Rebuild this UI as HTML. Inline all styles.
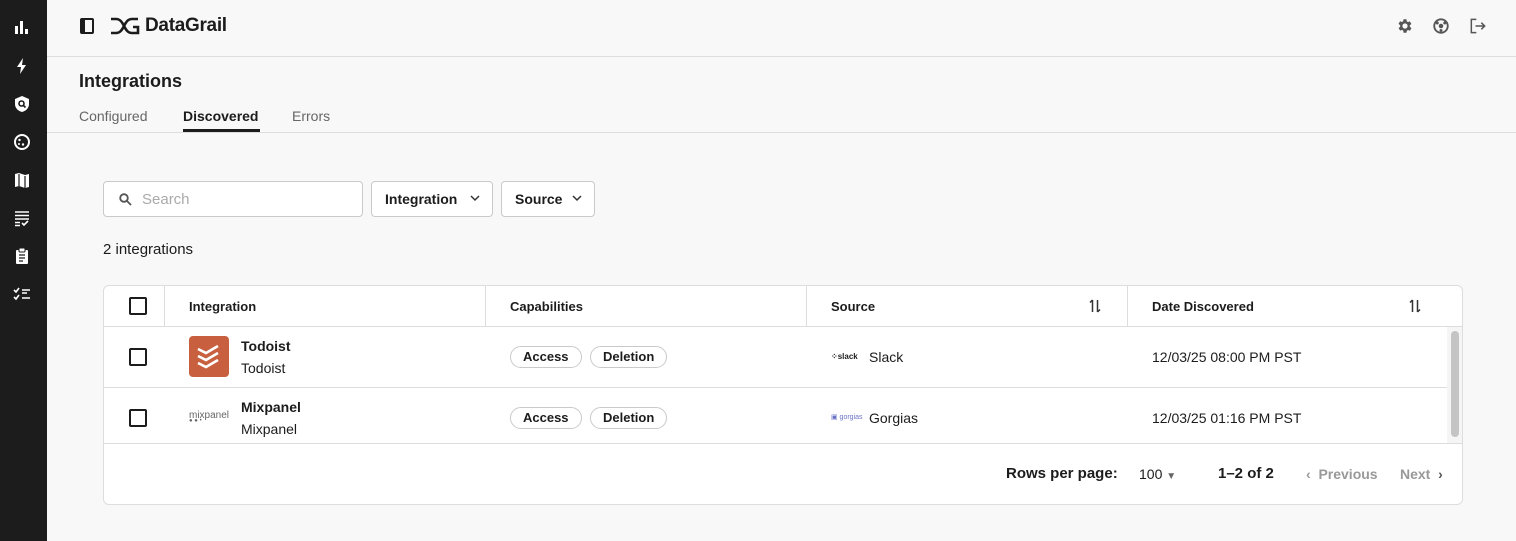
<!DOCTYPE html>
<html><head><style>
*{box-sizing:border-box;margin:0;padding:0}
body{width:1516px;height:541px;overflow:hidden;font-family:"Liberation Sans",sans-serif;background:#f7f8f7;color:#1b1c1b;position:relative;white-space:nowrap}
.sb{position:absolute;left:0;top:0;width:47px;height:541px;background:#1b1c1b}
.sb svg{position:absolute;left:13px}
.hd{position:absolute;left:47px;top:0;right:0;height:57px;background:#f7f8f7;border-bottom:1px solid #dcdddc}
.abs{position:absolute}
.tab{position:absolute;top:108px;font-size:14px;color:#666}
.box{position:absolute;background:#fff;border:1px solid #c9cac9;border-radius:4px;height:36px;top:181px;font-size:14px}
.tbl{position:absolute;left:103px;top:285px;width:1360px;height:220px;background:#fff;border:1px solid #dcdddc;border-radius:6px;overflow:hidden}
.th{position:absolute;top:13px;font-size:13px;font-weight:bold}
.cb{position:absolute;left:25px;width:18px;height:18px;border:2px solid #1b1c1b;border-radius:2px}
.pill{position:absolute;height:22px;border:1px solid #c9cac9;border-radius:11px;font-size:13px;font-weight:bold;padding:0 12px;line-height:20px}
.t{position:absolute;font-size:14px}
</style></head><body>
<div class="sb">
<svg style="top:18px" width="18" height="18" viewBox="0 0 18 18" fill="#fff"><rect x="2" y="8" width="3" height="8"/><rect x="7" y="3" width="3" height="13"/><rect x="12" y="11" width="3" height="5"/></svg>
<svg style="top:57px" width="18" height="18" viewBox="0 0 18 18" fill="#fff"><path d="M10 1L4 10h4l-1 7 6-9H9z"/></svg>
<svg style="top:95px" width="18" height="18" viewBox="0 0 18 18"><path d="M9 1l7 3v5c0 4-3 7-7 8-4-1-7-4-7-8V4z" fill="#fff"/><circle cx="8.5" cy="8.5" r="2.5" fill="none" stroke="#1b1c1b" stroke-width="1.6"/><path d="M10.5 10.5l2 2" stroke="#1b1c1b" stroke-width="1.6"/></svg>
<svg style="top:133px" width="18" height="18" viewBox="0 0 18 18"><circle cx="9" cy="9" r="7" fill="none" stroke="#fff" stroke-width="2"/><circle cx="6.5" cy="7" r="1.2" fill="#fff"/><circle cx="10" cy="11.5" r="1.2" fill="#fff"/><circle cx="6" cy="11" r="1" fill="#fff"/></svg>
<svg style="top:171px" width="18" height="18" viewBox="0 0 18 18" fill="#fff"><path d="M2 3l4-1 6 2 4-1v13l-4 1-6-2-4 1z"/><path d="M6 3v12M12 5v12" stroke="#1b1c1b" stroke-width="1.2"/></svg>
<svg style="top:209px" width="18" height="18" viewBox="0 0 18 18" stroke="#fff" stroke-width="1.6" fill="none"><path d="M2 3h14M2 6.5h14M2 10h14M2 13.5h5M2 16.5h5M9 14l2 2 4-4"/></svg>
<svg style="top:247px" width="18" height="18" viewBox="0 0 18 18"><rect x="3" y="3" width="12" height="14" rx="1" fill="#fff"/><rect x="6" y="1" width="6" height="4" rx="1" fill="#fff" stroke="#1b1c1b"/><path d="M6 8h6M6 11h6M6 14h4" stroke="#1b1c1b" stroke-width="1.3"/></svg>
<svg style="top:285px" width="18" height="18" viewBox="0 0 18 18" stroke="#fff" stroke-width="1.6" fill="none"><path d="M1 5l2 2 3-4M1 12l2 2 3-4M9 5h8M9 8h5M9 13h8"/></svg>
</div>
<div class="hd">
<div class="abs" style="left:33px;top:18px;width:14px;height:16px;border:2px solid #1b1c1b;border-left-width:5px;border-radius:2px"></div>
<svg class="abs" style="left:63px;top:17px" width="30" height="18" viewBox="0 0 30 18" fill="none" stroke="#1b1c1b" stroke-width="2.6"><path d="M1 2h5c4 0 6 3 8 7s4 7 8 7h6V10h-5M1 16h5c4 0 6-3 8-7s4-7 8-7h6"/></svg>
<div class="abs" style="left:98px;top:15px;font-size:19px;font-weight:bold;letter-spacing:-0.3px">DataGrail</div>
<svg class="abs" style="left:1349px;top:17px" width="18" height="18" viewBox="0 0 24 24"><path fill="#555" fill-rule="evenodd" d="M19.4 13a7.5 7.5 0 000-2l2.1-1.6-2-3.5-2.5 1a7 7 0 00-1.7-1L15 3h-4l-.4 2.7a7 7 0 00-1.7 1l-2.5-1-2 3.5L6.6 11a7.5 7.5 0 000 2l-2.1 1.6 2 3.5 2.5-1a7 7 0 001.7 1L11 21h4l.4-2.7a7 7 0 001.7-1l2.5 1 2-3.5zM13 15.5a3.5 3.5 0 110-7 3.5 3.5 0 010 7z" transform="translate(-1 0)"/></svg>
<svg class="abs" style="left:1385px;top:17px" width="18" height="18" viewBox="0 0 24 24"><circle cx="12" cy="12" r="9" fill="none" stroke="#555" stroke-width="2.5"/><circle cx="12" cy="12" r="3" fill="#555"/><circle cx="7" cy="8" r="2" fill="#555"/><circle cx="17" cy="8" r="2" fill="#555"/><circle cx="12" cy="18" r="2" fill="#555"/></svg>
<svg class="abs" style="left:1421px;top:16px" width="20" height="20" viewBox="0 0 24 24" fill="none" stroke="#555" stroke-width="1.8"><path d="M10 4H4v16h6M9 12h11M16 8l4 4-4 4"/></svg>
</div>
<div class="abs" style="left:79px;top:71px;font-size:18px;font-weight:bold">Integrations</div>
<div class="tab" style="left:79px">Configured</div>
<div class="tab" style="left:183px;color:#1b1c1b;font-weight:bold">Discovered</div>
<div class="abs" style="left:183px;top:129px;width:77px;height:3px;background:#1b1c1b"></div>
<div class="tab" style="left:292px">Errors</div>
<div class="abs" style="left:47px;top:132px;right:0;height:1px;background:#dcdddc"></div>
<div class="box" style="left:103px;width:260px"><svg class="abs" style="left:15px;top:11px" width="13" height="13" viewBox="0 0 13 13" fill="none" stroke="#555" stroke-width="1.8"><circle cx="5" cy="5" r="3.8"/><path d="M8 8l4 4"/></svg><span class="abs" style="left:38px;top:9px;color:#aaa;font-size:15px">Search</span></div>
<div class="box" style="left:371px;width:122px;font-weight:bold;padding:9px 13px">Integration</div>
<svg class="abs" style="left:470px;top:195px" width="10" height="7" viewBox="0 0 10 7" fill="none" stroke="#333" stroke-width="1.5"><path d="M1 1l4 4 4-4"/></svg>
<div class="box" style="left:501px;width:94px;font-weight:bold;padding:9px 13px">Source</div>
<svg class="abs" style="left:572px;top:195px" width="10" height="7" viewBox="0 0 10 7" fill="none" stroke="#333" stroke-width="1.5"><path d="M1 1l4 4 4-4"/></svg>
<div class="abs" style="left:103px;top:241px;font-size:15px">2 integrations</div>
<div class="tbl">
<div class="abs" style="left:0;top:40px;width:100%;height:1px;background:#dcdddc"></div>
<div class="abs" style="left:0;top:101px;width:1343px;height:1px;background:#dcdddc"></div>
<div class="abs" style="left:0;top:157px;width:100%;height:1px;background:#dcdddc"></div>
<div class="abs" style="left:60px;top:0;width:1px;height:40px;background:#dcdddc"></div>
<div class="abs" style="left:381px;top:0;width:1px;height:40px;background:#dcdddc"></div>
<div class="abs" style="left:702px;top:0;width:1px;height:40px;background:#dcdddc"></div>
<div class="abs" style="left:1023px;top:0;width:1px;height:40px;background:#dcdddc"></div>
<div class="abs" style="left:1343px;top:41px;width:16px;height:116px;background:#f5f5f5"></div>
<div class="abs" style="left:1347px;top:45px;width:8px;height:106px;background:#c4c4c4;border-radius:4px"></div>
<div class="cb" style="top:11px"></div>
<div class="th" style="left:85px">Integration</div>
<div class="th" style="left:406px">Capabilities</div>
<div class="th" style="left:727px">Source</div>
<svg class="abs" style="left:985px;top:13px" width="12" height="14" viewBox="0 0 12 14" fill="none" stroke="#333" stroke-width="1.5"><path d="M3.5 13V1M1 3.5l2.5-2.5M8.5 1v12M11 10.5l-2.5 2.5"/></svg>
<div class="th" style="left:1048px">Date Discovered</div>
<svg class="abs" style="left:1305px;top:13px" width="12" height="14" viewBox="0 0 12 14" fill="none" stroke="#333" stroke-width="1.5"><path d="M3.5 13V1M1 3.5l2.5-2.5M8.5 1v12M11 10.5l-2.5 2.5"/></svg>
<div class="cb" style="top:62px"></div>
<div class="abs" style="left:85px;top:50px;width:40px;height:41px;background:#c8603f;border-radius:4px"></div>
<svg class="abs" style="left:93px;top:59px" width="24" height="24" viewBox="0 0 24 24" fill="none" stroke="#fff" stroke-width="2.6"><path d="M1 4l8 4 12-7M1 11l8 4 12-7M1 18l8 4 12-7"/></svg>
<div class="t" style="left:137px;top:52px;font-weight:bold">Todoist</div>
<div class="t" style="left:137px;top:74px">Todoist</div>
<div class="pill" style="left:406px;top:60px">Access</div>
<div class="pill" style="left:486px;top:60px">Deletion</div>
<div class="t" style="left:727px;top:66px;font-size:8px;font-weight:bold">⁘slack</div>
<div class="t" style="left:765px;top:63px">Slack</div>
<div class="t" style="left:1048px;top:63px">12/03/25 08:00 PM PST</div>
<div class="cb" style="top:123px"></div>
<div class="t" style="left:85px;top:124px;font-size:10px;color:#666">mixpanel</div>
<div class="t" style="left:85px;top:132px;font-size:6px;color:#666">● ● •</div>
<div class="t" style="left:137px;top:113px;font-weight:bold">Mixpanel</div>
<div class="t" style="left:137px;top:135px">Mixpanel</div>
<div class="pill" style="left:406px;top:121px">Access</div>
<div class="pill" style="left:486px;top:121px">Deletion</div>
<div class="t" style="left:727px;top:127px;font-size:7px;color:#6a72c8">▣ gorgias</div>
<div class="t" style="left:765px;top:124px">Gorgias</div>
<div class="t" style="left:1048px;top:124px">12/03/25 01:16 PM PST</div>
<div class="t" style="left:902px;top:179px;font-size:15px;font-weight:bold">Rows per page:</div>
<div class="t" style="left:1035px;top:180px">100 <span style="font-size:10px;color:#666">▼</span></div>
<div class="t" style="left:1114px;top:179px;font-size:15px;font-weight:bold">1–2 of 2</div>
<div class="t" style="left:1202px;top:180px;color:#999;font-weight:bold">‹ &nbsp;Previous</div>
<div class="t" style="left:1296px;top:180px;color:#999;font-weight:bold">Next &nbsp;<span style="color:#555">›</span></div>
</div>
</body></html>
